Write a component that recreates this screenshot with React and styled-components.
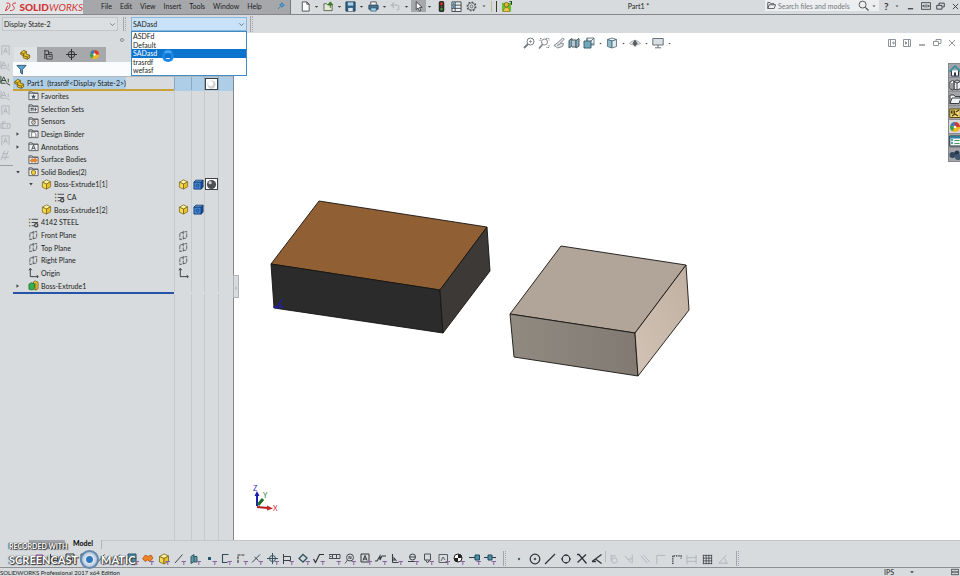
import React, { useState } from 'react'
import styled, { createGlobalStyle, css } from 'styled-components'

const GlobalStyle = createGlobalStyle`
  * { box-sizing: border-box; }
  html, body, #root { height: 100%; }
  body {
    margin: 0;
    overflow: hidden;
    background: #d7dbde;
    color: #1b1d20;
    font: 7px/12px Lato, "Open Sans", sans-serif;
  }
  button, input, select { font: inherit; color: inherit; }
  ul { list-style: none; margin: 0; padding: 0; }
`

/* ---------- icons ---------- */

const folder = (
  <path d="M1 10.500V2h3.500l1 1.500h5.500v7z M1 3.500h10" fill="#eceeef" stroke="#55585c" />
)
const cube = (top, left, right, line) => (
  <g stroke={line} strokeWidth=".8" strokeLinejoin="round">
    <path d="M1.500 3.500 6 1l4.500 2L6 5.500z" fill={top} />
    <path d="M1.500 3.500 6 5.500V11L1.500 9z" fill={left} />
    <path d="M10.500 3 6 5.500V11l4.500-2.500z" fill={right} />
  </g>
)
const material = (
  <g fill="none" stroke="#3d4144">
    <path d="M4 2.500h7M4 6h7M4 9.500h3" />
    <path d="M1 2.500h1.500M1 6h1.500M1 9.500h1.500" stroke="#8c7a3c" strokeWidth="1.500" />
    <circle cx="9" cy="9" r="1.800" strokeWidth="1.300" />
  </g>
)

const glyphs = {
  part: (
    <g stroke="#5f4c05" strokeWidth=".8" fill="#efc52b">
      <path d="M.8 4 4 1.500l3 1.200v3l3.500 1v3L8 11.300 3.500 9.500V7L.8 6z" />
      <path d="M.8 4 4 5.200v2.300l4 1.300 2.500-2M4 5.200l3-2.500M8 8.800v2.500" fill="none" />
    </g>
  ),
  favorites: <>{folder}<path d="m6 4.500.8 1.700 1.900.2-1.400 1.300.4 1.800L6 8.600l-1.700.9.400-1.800-1.400-1.300 1.900-.2z" fill="#3f5363" /></>,
  sets: <>{folder}<path d="M3.500 5v4M5.500 5v4M8 5v4M3 6h3M7 7h2.500" stroke="#44494d" fill="none" /></>,
  sensors: <>{folder}<circle cx="6" cy="7" r="2" fill="none" stroke="#494d51" /><path d="m6 7 2-2" stroke="#b4592a" /></>,
  binder: <>{folder}<path d="M4 4.500h2.500L8.500 6.500V10H4z" fill="#fff" stroke="#5a5d60" strokeWidth=".8" /></>,
  annotations: <>{folder}<path d="m4 9.500 2-5 2 5M4.700 8h2.600" fill="none" stroke="#3a3d40" strokeWidth=".9" /></>,
  surface: <>{folder}<path d="m2.500 7 2-2 1.500 1 2-1.500 1.800 2.500L8 9.200 6 8 4 9z" fill="#f08a24" stroke="#b2540d" strokeWidth=".6" /></>,
  solid: <>{folder}<path d="m3.800 5.500 2.200-1 2.200 1v3L6 9.800 3.800 8.500z" fill="#f0cb3a" stroke="#6b5608" strokeWidth=".7" /></>,
  body: cube('#fff3a0', '#f6d94e', '#e8c02e', '#77651b'),
  blueBody: (
    <g stroke="#10346c" strokeWidth=".9">
      <path d="M1 3.500 3 1.300h8L9 3.500z" fill="#6fb1ec" />
      <path d="M1 3.500h8V11H1z" fill="#3f87d6" />
      <path d="M9 3.500 11 1.300v7.500L9 11z" fill="#1f549c" />
      <circle cx="5" cy="7.200" r="1.500" fill="none" stroke="#0d2b5c" strokeWidth=".7" />
    </g>
  ),
  material,
  plane: <path d="M2 3.500 9.500 1.500v7L2 10.500zM5.700 1v10" fill="none" stroke="#4c5054" strokeWidth=".9" strokeDasharray="4 1" />,
  origin: <path d="M2.500 10.500V2m0 8.500H11M1 3.500 2.500 1.500 4 3.500M9.500 9 11.300 10.500 9.500 12" fill="none" stroke="#303336" />,
  extrude: (
    <g strokeWidth=".8">
      <path d="M6 2 8 1l3 1.500v7L8.500 11 6 10z" fill="#e5c23b" stroke="#6d5a12" />
      <path d="M8.500 3.500V11" stroke="#6d5a12" />
      <path d="M1 4.500 3.500 3 7 4v5l-2.500 2L1 10z" fill="#35b14c" stroke="#14662a" />
    </g>
  ),
  ball: <><circle cx="6" cy="6" r="5" fill="#4d4f52" /><circle cx="4.500" cy="4" r="1.800" fill="#c9cbce" /></>,
  whiteBall: <><circle cx="6" cy="6" r="4.500" fill="#d2d2d4" /><circle cx="5" cy="5" r="2.800" fill="#fff" /></>,
  property: <g fill="none" stroke="#34383c"><path d="M2 1v10M2 2h4v4H2M6 4h4M4 6v5h6V6zM6 8h3" /></g>,
  target: <g fill="none" stroke="#26292c"><circle cx="6" cy="6" r="3.500" /><path d="M6 0v12M0 6h12" /></g>,
  appearance: (
    <g>
      <circle cx="6" cy="6" r="5" fill="#f2b71f" />
      <path d="M6 6V1a5 5 0 0 0-4.700 3.500z" fill="#3b75c9" />
      <path d="M6 6 1.300 4.500a5 5 0 0 0 2 5.700z" fill="#3ba04b" />
      <path d="M6 6V1a5 5 0 0 1 5 5z" fill="#d8372c" />
      <circle cx="6" cy="6" r="1.300" fill="#fff" />
    </g>
  ),
  filter: <path d="M1 1.500h10L7 6v5L5 9.500V6z" fill="#5fa5cf" stroke="#24506f" />,
  pin: <path d="m7 1 4 4-2 .5L7.500 8 4 4.500 6.500 3zM5.500 6.500 1.500 10.500" fill="#4aa3dc" stroke="#1f6fa5" />,
  newDoc: <path d="M2.500 1h5L10 3.500V11H2.500zM7.500 1v2.500H10" fill="#fff" stroke="#4a4d50" />,
  open: <><path d="M1 10.500V3h3l1 1.200h5V10.500z" fill="#e5e8d8" stroke="#5b6350" /><path d="M8 7.500V2M5.500 4 8 1l2.500 3z" fill="#4c9b28" stroke="#33721b" /></>,
  save: <><path d="M1 1h10v10H1z" fill="#2f5f83" stroke="#213c52" /><path d="M3 1.500h6V5H3z" fill="#a9d1e8" /><path d="M3.500 7.500h5V11h-5z" fill="#dfe5e9" /></>,
  print: <><path d="M3 4V1h6v3" fill="#fff" stroke="#4b4f53" /><path d="M1 4.500h10V9H1z" fill="#47718f" stroke="#28465b" /><path d="M3 7.500h6V11H3z" fill="#9fd2ee" stroke="#28465b" strokeWidth=".7" /></>,
  undo: <path d="M1.500 4.500h6a2.800 2.800 0 0 1 0 5.500M4.500 1.500l-3 3 3 3" fill="none" stroke="#b5b9bc" strokeWidth="1.400" />,
  cursor: <path d="M3.500.8v8.700l2-2L7 11l1.500-.7L7 7h3z" fill="#fff" stroke="#2f3235" strokeWidth=".9" />,
  traffic: <><rect x="3" y="0" width="6" height="12" rx="2" fill="#2b2b2b" /><circle cx="6" cy="3" r="1.600" fill="#d52f24" /><circle cx="6" cy="6" r="1" fill="#6b5a26" /><circle cx="6" cy="9" r="1.600" fill="#3b8b37" /></>,
  list: <><path d="M1 1h10v10.500H1z" fill="#eef1f3" stroke="#3c4145" /><path d="M4.500 1v10.500M1 4.500h10M1 8h10" stroke="#3c4145" /><path d="M2 2h2v2H2zM2 5.500h2v2H2z" fill="#3f88b5" /></>,
  gear: <g fill="none" stroke="#4d5154"><circle cx="6" cy="6" r="4.800" strokeWidth="1.300" strokeDasharray="2 1.700" /><circle cx="6" cy="6" r="3.900" strokeWidth=".8" /><circle cx="6" cy="6" r="1.500" strokeWidth=".8" /></g>,
  person: <><path d="M1 2h10v9.500H1z" fill="#62c32f" /><circle cx="6" cy="4" r="2.500" fill="#e8b03a" stroke="#5b4312" strokeWidth=".6" /><path d="M2.500 11.500c0-6 7-6 7 0z" fill="#f0c14c" stroke="#845f10" strokeWidth=".6" /><path d="M9 0h2.500v4" fill="none" stroke="#12491b" strokeWidth="1.500" /></>,
  folderOpen: <path d="M1 10V2h3l1 1.500h4V5M1 10l2-5h8.500L9.500 10z" fill="none" stroke="#35393d" />,
  search: <g fill="none" stroke="#4d5154"><circle cx="5" cy="5" r="3.800" /><path d="m8 8 3.500 3.500" strokeWidth="1.400" /></g>,
  minimize: <path d="M2.500 9h7" stroke="currentColor" strokeWidth="1.600" />,
  panes: <path d="M.5 2h11v8H.5zM6 4v4M2 6h3M7 6h3M3.500 4.500 2 6l1.500 1.500M8.500 4.500 10 6 8.500 7.500" fill="none" stroke="currentColor" />,
  restore: <path d="M4 4V1.500h7v5H8.500M1 4.500h7v5H1z" fill="none" stroke="currentColor" strokeWidth="1.200" />,
  close: <path d="m2.500 2.500 7 7m0-7-7 7" stroke="currentColor" strokeWidth="1.200" />,
  docMinimize: <path d="M3 8h6" stroke="currentColor" strokeWidth="1.500" />,
  docRestore: <path d="M5 4.500V2.500h5v4H8M2.500 4.500h5v4h-5z" fill="none" stroke="currentColor" />,
  docClose: <path d="m3 3 6 6m0-6-6 6" stroke="currentColor" />,
  paneLeft: <path d="M2.500 2.500h7v7h-7zM4.500 2.500v7M8 4.800 6.500 6 8 7.200z" fill="none" stroke="currentColor" />,
  paneRight: <path d="M2.500 2.500h7v7h-7zM7.500 2.500v7M4.500 4.800 6 6 4.500 7.200z" fill="none" stroke="currentColor" />,
  zoomFit: <g fill="none" stroke="#75797d"><circle cx="7.500" cy="4.500" r="3.500" /><path d="m5 7-4 4" strokeWidth="1.800" /><path d="M6 4.500h3M7.500 3v3" strokeWidth=".7" /></g>,
  zoomArea: <g fill="none" stroke="#808488"><path d="M2 4V1.500h2.500M8 1.500h3V4M11 8v2.500H8" strokeDasharray="1.500 1" /><circle cx="6.500" cy="5" r="3" /><path d="m4.500 7.500-3.500 4" strokeWidth="1.700" /></g>,
  prevView: <path d="m.8 8.500 4-3 5-4.500 1.500 1.200L7.500 6l3 .5-1 3L4.500 11 3 9.500z M4 8.500l4-2" fill="#e3e7ea" stroke="#7c8185" strokeWidth=".9" />,
  section: <><path d="m1 3.500 3-2v7.500l-3 2z" fill="#7ba8b8" stroke="#475a62" /><path d="M4 3h4v7H4" fill="#b9c9d0" stroke="#475a62" /><path d="m8 3.500 3-2v7.500l-3 2z" fill="#8fb2be" stroke="#475a62" /></>,
  orientation: <><path d="M4 1h7v7H4z" fill="#eef2f4" stroke="#6e828b" /><path d="M1 4h7v7H1z" fill="#6fa9bd" stroke="#42606d" /><path d="M8 4 11 1M4 4V1M8 7h3" stroke="#42606d" strokeWidth=".8" /></>,
  display: (
    <g stroke="#4a6875" strokeWidth=".8">
      <path d="M1.500 2.500 6 1l4.500 1.500L6 4z" fill="#e7f0f3" />
      <path d="M1.500 2.500 6 4v7L1.500 9.500z" fill="#8fbccb" />
      <path d="M10.500 2.500 6 4v7l4.500-1.500z" fill="#dfe9ed" />
    </g>
  ),
  eye: <><path d="M.5 6.500C3 2.500 9 2.500 11.500 6.500 9 8.500 3 8.500.5 6.500z" fill="#d9dbdd" stroke="#9a9da0" strokeWidth=".7" /><path d="m6 2.500 2.500 4L6 10 3.500 6.500z" fill="#5a5d60" /></>,
  monitor: <><path d="M.8 1.500h10.400v6.500H.8z" fill="#d9e0e3" stroke="#6c7074" /><path d="M6 8v2.500M3 10.800h6" stroke="#6c7074" /></>,
  home: <><path d="M2.500 5.500V11h7V5.500" fill="#fff" stroke="#2b3b44" /><path d="M.5 6.500 6 1l5.500 5.500" fill="none" stroke="#3c8f9d" strokeWidth="1.800" /><path d="M5 7.500h2V11H5z" fill="#335" /></>,
  library: (
    <g stroke="#33373b" strokeWidth=".9" fill="#eff0f1">
      <path d="m1 3 2.500-1.500L5 2.500v8L3.500 11 1 9.500zM3 4v7M5 2.500 8 1l3.500 1.500v7L8 11l-3-1zM8 4v7M5 2.500 8 4l3.500-1.500" />
    </g>
  ),
  files: <path d="M1 10.500V2h4l1 1.500h5V5M1 10.500 3 5h9l-2 5.500z" fill="#f3f4f5" stroke="#3a3e42" />,
  palette: <><path d="M.8 2h10.500v8.500H.8z" fill="#f1d878" stroke="#5d4a10" /><path d="M2.500 4h3v2h-3zM7 5l3-2M3 9l3-2 3 2" fill="none" stroke="#473807" strokeWidth="1.200" /></>,
  properties: <><path d="M.8 1h11v10H.8z" fill="#f4f8fa" stroke="#1f2f38" /><path d="M.8 1h11v2.500H.8z" fill="#2f7f98" /><path d="M2 5h2M2 8h2" stroke="#2f7f98" strokeWidth="1.500" /><path d="M5.500 5.500h5M5.500 8.500h5" stroke="#495" /></>,
  forum: <><circle cx="3.500" cy="6" r="3" fill="#33475e" /><circle cx="8" cy="4" r="2.500" fill="#27394f" /><circle cx="9" cy="8" r="3" fill="#40566f" /></>,
  // selection filter strip
  fPurple: <path d="M2 2h7v8H2zM3 5h5" fill="#c9a6cf" stroke="#8a4b94" />,
  fBox: <path d="M1 1h8v8H1z" fill="#4b8fa8" stroke="#285869" />,
  fSurface: <path d="m.5 5.500 3-3.500 2.500 1.500 3-1.500L11 5 8 8.500 5.500 7 3 8.500z" fill="#ef8126" stroke="#a94f0b" strokeWidth=".7" />,
  fLine: <path d="M1 10 8.500 1.500" stroke="#40464a" />,
  fFace: <path d="m2 3.500 3-2v7l-3 2zM5 3.500h3V9H5" fill="#5f98a7" stroke="#315a67" />,
  fPoint: <path d="M3 4h3v3H3z" fill="#28586e" />,
  fSketch: <path d="M8.500 1.500h-6v8h5" fill="none" stroke="#2e4c5c" strokeWidth="1.100" />,
  fSegment: <path d="M2 10V2h7" fill="none" stroke="#33383c" strokeWidth="1.100" strokeDasharray="3 .8" />,
  fMid: <path d="m1 9.500 8-8M3.500 4l4 3.500" stroke="#3b4a54" />,
  fCenter: <g fill="none" stroke="#35545f"><circle cx="5.500" cy="5.500" r="3" /><path d="M5.500 0v11M0 5.500h11" /></g>,
  fDim: <path d="M1.500 1v10M1.500 3.500h7v4h-7" fill="none" stroke="#3d4246" />,
  fTag: <path d="m1 5.500 4-4 4 3.500-4 4z" fill="none" stroke="#35545f" strokeWidth="1.300" />,
  fCheck: <path d="m.5 6 2 3.500L6.500 1.500H11" fill="none" stroke="#2c3033" strokeWidth="1.200" />,
  fTol: <path d="M0 1.500h11v4H0zM3.500 1.500v4M7.500 1.500v4M1 3.500h1.500" fill="none" stroke="#4a4e52" />,
  fNote: <g fill="none" stroke="#4a4e52"><circle cx="6" cy="4.500" r="3.500" /><path d="M3.500 7 1 10.500M5 6V3l2 3V3" strokeWidth=".9" /></g>,
  fText: <path d="M1 1h8v8H1zM3 7.500l2-5 2 5M3.800 6h2.500" fill="none" stroke="#303437" />,
  fWeld: <path d="M0 8h2l3-5v4l2-4h4" fill="none" stroke="#33383c" strokeWidth="1.100" />,
  fHole: <path d="M1.500 1v8.500M3 8V5l2.500 3M1.500 9.500h6" fill="none" stroke="#3a3f43" strokeWidth="1.100" />,
  fDatum: <g fill="none" stroke="#3a3f43"><circle cx="5.500" cy="4" r="3" /><path d="M1 8.500h8M3 4h5" /></g>,
  fBolt: <path d="M2.500 1h6v6h-6zM3.500 7l2 3 2-3" fill="none" stroke="#4c5155" />,
  fRegion: <path d="M1 1.500h8.500v8H1zM3 8l2-4 2 3" fill="none" stroke="#5c6165" />,
  fMass: <><circle cx="5" cy="5" r="4" fill="#fff" stroke="#222" /><path d="M5 5V1a4 4 0 0 1 4 4zM5 5v4a4 4 0 0 1-4-4z" fill="#222" /></>,
  fEnd: <><path d="M0 4.500h6" stroke="#2d3940" /><path d="M6 2h4.500v5H6z" fill="#4b8fa8" stroke="#204a5b" /></>,
  fRoute: <><path d="M0 4.500h12" stroke="#2d3940" /><path d="M4 2h4v5H4z" fill="#4b8fa8" stroke="#204a5b" /></>,
  // snaps
  sPoint: <circle cx="6" cy="6" r="1.200" fill="#506068" />,
  sCenter: <g fill="none" stroke="#303438"><circle cx="6" cy="6" r="4.800" strokeWidth="1.200" /><circle cx="6" cy="6" r=".8" /></g>,
  sLine: <path d="m1 11 10-10" stroke="#303438" strokeWidth="1.300" />,
  sQuad: <g fill="none" stroke="#303438"><circle cx="6" cy="6" r="3.800" strokeWidth="1.200" /><path d="M6 1v2M6 9v2M1 6h2M9 6h2" /></g>,
  sCross: <path d="M1 1.500h2l7.500 9M10 1.500 1.500 9.500" stroke="#303438" strokeWidth="1.300" fill="none" />,
  sNear: <path d="m1 8.500 9.500-7M4.500 6l6 4.500M1 8.500h4" stroke="#303438" strokeWidth="1.300" />,
  sTangent: <g fill="none" stroke="currentColor"><circle cx="7" cy="7" r="3" /><path d="M3.500 1v6.500M3.500 2h5" /></g>,
  sPerp: <path d="m1 2 7 8M9 1v9M9 5 4 6" fill="none" stroke="currentColor" />,
  sParallel: <path d="m1 2 7 8M4 1l7 8" stroke="currentColor" />,
  sHV: <path d="M2 11V1.500h9" fill="none" stroke="currentColor" />,
  sHVPoints: <path d="M2 11V2h9v3" fill="none" stroke="#303438" strokeWidth="1.500" strokeDasharray="1.500 1" />,
  sLength: <path d="M1 1v10M11 1v10M1 4h10M1 8h10" stroke="currentColor" />,
  sGrid: <path d="M1.500 1v10M4.500 1v10M7.500 1v10M10.500 1v10M1 1.500h10M1 4.500h10M1 7.500h10M1 10.500h10" stroke="#303438" strokeWidth=".8" />,
  sAngle: <path d="M9 1 1 10h10M7 4q2 2 2 6" fill="none" stroke="currentColor" />,
  // side strip
  note: <path d="M2 11V1h8v10M4 9l2-6 2 6M4.500 7h3" fill="none" stroke="currentColor" />,
  noteArrow: <path d="M1 1v8h5M1 8l3-6 3 6M2 6h4M9 4v4M7 9l4 2" fill="none" stroke="currentColor" />,
  cap: <path d="M1 4h10v5H1zM3 9V2h3M8 5v3" fill="none" stroke="currentColor" />,
  hatch: <path d="m1 11 4-10M5 11 9 1M3 4h5M2 8h8" stroke="currentColor" />,
  chevron: <path d="m3 4.500 3 3 3-3" fill="none" stroke="#585d62" />,
  caret: <path d="M3 5h6L6 8z" fill="#3d4145" />,
  triRight: <path d="m3 2.500 5 3.500-5 3.500z" fill="#3d4145" />,
  triDown: <path d="M2.500 4h7L6 9z" fill="#3d4145" />,
}

const Svg = styled.svg`
  display: block;
  flex: none;
  width: ${p => p.$size}px;
  height: ${p => p.$size}px;
`

const Icon = ({ name, size = 11, filter }) => (
  <Svg $size={size} viewBox="0 0 12 12" aria-hidden="true">
    {glyphs[name]}
    {filter && <path d="M7.500 8.500h4.500M9.800 8.500v3.500" stroke="#8a62a0" />}
  </Svg>
)

/* ---------- shared ---------- */

const Page = styled.div`
  position: relative;
  display: flex;
  flex-direction: column;
  height: 100vh;
  overflow: hidden;
`

const IconButton = styled.button`
  display: flex;
  align-items: center;
  justify-content: center;
  min-width: 0;
  padding: 0;
  border: 0;
  color: ${p => p.$tone || '#33373b'};
  background: ${p => (p.$active ? '#a5a7ab' : 'transparent')};
`

/* ---------- title bar ---------- */

const TitleBar = styled.header`
  display: flex;
  flex: none;
  height: 15px;
  border-bottom: 1px solid #85878c;
`

const Logo = styled.div`
  display: flex;
  align-items: center;
  gap: 3px;
  width: 83px;
  padding-left: 5px;
  background: #e3e4e6;
  color: #cf3535;
  font-size: 10px;
  font-style: italic;

  b { font-style: normal; font-weight: 900; }
`

const MenuBar = styled.nav`
  display: flex;
  align-items: center;
  gap: 8px;
  width: 208px;
  padding: 0 5px 2px 18px;
  border-right: 1px solid #77797d;
  background: #a6a7ab;
`

const MenuItem = styled.button`
  padding: 0;
  border: 0;
  background: none;
  line-height: 12px;
`

const PinSlot = styled.span`
  margin-left: auto;
`

const QuickTools = styled.div`
  display: flex;
  flex: none;
  width: 135px;
  margin-left: 7px;
  padding-bottom: 2px;
`

const Tool = styled.div`
  display: flex;
  flex: 1;
  align-items: stretch;

  > :first-child { width: 15px; }
`

const ExtraTools = styled.div`
  display: flex;
  flex: none;
  align-items: center;
  gap: 4px;
  padding: 0 0 2px 3px;
`

const Divider = styled.span`
  width: 1px;
  height: 11px;
  background: ${p => p.$color || '#9a9da1'};
`

const DocTitle = styled.h1`
  flex: 1;
  margin: 0;
  font-size: 7px;
  font-weight: 400;
  line-height: 12px;
  text-align: center;
`

const SearchBox = styled.label`
  display: flex;
  align-items: center;
  gap: 2px;
  height: 11px;
  width: 114px;
  padding: 0 2px;
  background: #eceef0;
`

const SearchInput = styled.input`
  flex: 1;
  min-width: 0;
  height: 11px;
  padding: 0;
  border: 0;
  background: none;

  &::placeholder { color: #75797e; opacity: 1; }
`

const WindowButtons = styled.div`
  display: flex;
  align-items: center;
  justify-content: space-between;
  height: 12px;
  width: 76px;
  margin-left: 5px;

  b { font-size: 10px; }
`

/* ---------- configuration bar ---------- */

const ConfigBar = styled.div`
  display: flex;
  flex: none;
  align-items: center;
  height: 18px;
  padding-left: 2px;
`

const Grip = styled.span`
  width: 3px;
  height: ${p => p.$height || 14}px;
  margin: 0 ${p => p.$gap || 5}px;
  border-left: 1px solid #a3a6aa;
  border-right: 1px dotted #a3a6aa;
`

const Combo = styled.div`
  position: relative;
  display: flex;
  align-items: center;
  width: 116px;
  height: 14px;
  border: 1px solid ${p => (p.$open ? '#8ab6dc' : '#c3c6c9')};
  background: ${p => (p.$open ? '#c9e2f7' : '#dcdfe2')};

  > svg { position: absolute; right: 0; pointer-events: none; }
`

const Select = styled.select`
  width: 100%;
  height: 12px;
  padding: 0 12px 0 1px;
  border: 0;
  background: none;
  appearance: none;
  outline: 0;
`

const Popup = styled.ul`
  position: absolute;
  z-index: 5;
  top: 13px;
  left: -1px;
  display: flex;
  flex-direction: column;
  width: 116px;
  height: 45px;
  border: 1px solid #3e8bc6;
  background: #fff;
`

const Choice = styled.li`
  flex: 1;
  min-height: 0;
  padding-left: 1px;
  line-height: 8px;
  color: ${p => (p.$selected ? '#fff' : 'inherit')};
  background: ${p => (p.$selected ? '#0b74cc' : 'transparent')};
`

const Busy = styled.span`
  position: absolute;
  z-index: 6;
  top: 32px;
  left: 30px;
  width: 12px;
  height: 12px;
  border: 3px solid #1b86e6;
  border-top-color: #48a6f5;
  border-radius: 50%;
`

/* ---------- feature manager ---------- */

const Main = styled.main`
  display: flex;
  flex: 1;
  min-height: 0;
`

const Side = styled.aside`
  position: relative;
  display: flex;
  flex: none;
  width: 234px;
  border-right: 1px solid #85878b;
`

const SideStrip = styled.div`
  display: flex;
  flex-direction: column;
  align-items: flex-start;
  gap: 4px;
  width: 13px;
  height: 133px;
  padding-top: 12px;
  overflow: hidden;
  border-bottom: 1px solid #9b9ea2;
`

const Manager = styled.div`
  display: flex;
  flex: 1;
  flex-direction: column;
  min-width: 0;
`

const ManagerTop = styled.div`
  display: flex;
  justify-content: flex-end;
  align-items: center;
  height: 14px;
  padding-right: 109px;

  i {
    width: 4px;
    height: 4px;
    border: 1px solid #8b8e92;
    border-radius: 50%;
  }
`

const Tabs = styled.div`
  display: flex;
  height: 15px;
  padding-left: 1px;

  button { width: 23px; background: #a6a8ab; }
  button:first-child { background: #dfe2e4; }
`

const FilterRow = styled.label`
  display: flex;
  align-items: center;
  height: 15px;
  padding-left: 3px;
  border-bottom: 1px solid #b5b8bb;
  background: #fbfcfd;
`

const FilterInput = styled.input`
  flex: 1;
  min-width: 0;
  height: 12px;
  border: 0;
  background: none;
`

const Tree = styled.ul`
  display: flex;
  flex: none;
  flex-direction: column;
  height: 215px;
`

const columns = css`
  display: grid;
  grid-template-columns: 1fr 17px 13px 14px 15px;
`

const Row = styled.li`
  ${columns}
  flex: 1;
  min-height: 0;
`

const Filler = styled.div`
  ${columns}
  flex: 1;
`

const Cell = styled.span`
  display: flex;
  align-items: center;
  justify-content: center;
  min-width: 0;
  border-left: 1px solid ${p => (p.$on ? '#86aac6' : '#c6cacd')};
  background: ${p => (p.$on ? '#aecde6' : 'transparent')};
`

const Swatch = styled.span`
  display: flex;
  align-items: center;
  justify-content: center;
  flex: none;
  width: 13px;
  height: 12px;
  border: 1px solid #3f4245;
  background: #fff;
`

const levels = { 0: 1, 1: 2, 2: 15, 3: 28 }

const Name = styled.span`
  display: flex;
  align-items: center;
  gap: 2px;
  min-width: 0;
  padding-left: ${p => levels[p.$level]}px;
  white-space: pre;
  border-bottom: ${p => (p.$level === 0 ? '2px solid #c9a23a' : '0')};
  background: ${p => (p.$level === 0 ? 'linear-gradient(90deg, #aecde6 113px, #d7dbde 113px)' : 'none')};
`

const Twist = styled.button`
  display: flex;
  width: 11px;
  height: 8px;
  align-items: center;
  justify-content: flex-start;
  padding: 0;
  border: 0;
  background: none;
`

const Rollback = styled.div`
  flex: none;
  width: 161px;
  height: 2px;
  background: #2453a8;
`

const SplitHandle = styled.button`
  position: absolute;
  z-index: 2;
  top: 242px;
  right: -6px;
  width: 6px;
  height: 23px;
  padding: 0;
  border: 1px solid #aeb1b5;
  background: #d7dbde;
  line-height: 20px;
  color: #777;
`

/* ---------- viewport ---------- */

const Viewport = styled.section`
  position: relative;
  flex: 1;
  min-width: 0;
  background: #fff;
`

const Scene = styled.svg`
  display: block;
  width: 100%;
  height: 100%;
`

const HeadsUp = styled.div`
  position: absolute;
  top: 4px;
  left: 289px;
  display: flex;
  gap: 3px;
  align-items: center;
`

const DocButtons = styled.div`
  position: absolute;
  top: 4px;
  right: 2px;
  display: flex;
  gap: 3px;
`

const TaskPane = styled.div`
  position: absolute;
  top: 30px;
  right: 0;
  display: flex;
  flex-direction: column;
  width: 12px;
  border: 1px solid #85878b;
  border-right: 0;
  background: #a3a5a9;

  button {
    height: 13px;
    justify-content: flex-start;
    border-bottom: 1px solid #8a8c90;
    box-sizing: content-box;
  }
  button:last-child { border-bottom: 0; }
  button:nth-child(5) { background: #d5d7da; }
`

/* ---------- bottom ---------- */

const Dock = styled.footer`
  flex: none;
  height: 27px;
`

const SheetTabs = styled.div`
  display: flex;
  height: 11px;
  padding-left: 29px;
`

const SheetArrows = styled.span`
  width: 36px;
  height: 9px;
  background: #a0a3a7;
`

const SheetTab = styled.button`
  width: 37px;
  height: 9px;
  padding: 0 0 2px;
  border: 0;
  border-right: 1px solid #b1b4b8;
  background: none;
  color: #000;
  font-weight: 700;
  line-height: 7px;
`

const SheetRest = styled.span`
  flex: 1;
  border-top: 1px solid #c4c7ca;
`

const Filters = styled.div`
  display: flex;
  height: 16px;
  padding-left: 32px;
`

const Strip = styled.div`
  display: flex;
  flex: none;
  width: ${p => p.$width}px;

  button { flex: 1; }
`

const StatusBar = styled.div`
  display: flex;
  flex: none;
  height: 9px;
  border-top: 1px solid #8d9094;
  line-height: 8px;
  white-space: nowrap;
`

const Edition = styled.span`
  flex: 1;
  font-size: 6px;
  line-height: 9px;
`

const StatusItem = styled.span`
  width: ${p => p.$width}px;
`

const Watermark = styled.div`
  position: absolute;
  z-index: 8;
  bottom: 7px;
  left: 9px;
  color: #fff;
  font-weight: 700;
  text-shadow: 0 0 1px #222, 1px 1px 1px #333, -1px 0 1px #555;
`

const WatermarkSmall = styled.div`
  line-height: 8px;
`

const WatermarkLine = styled.div`
  display: flex;
  align-items: center;
  gap: 2px;
  font-size: 11px;
  line-height: 18px;
`

const Lens = styled.span`
  width: 19px;
  height: 19px;
  border: 2px solid #6588ad;
  border-radius: 50%;
  background: radial-gradient(circle, #2f76c0 3px, #dfe8f1 4px, #a8bfd6 8px);
`

/* ---------- data ---------- */

const menus = ['File', 'Edit', 'View', 'Insert', 'Tools', 'Window', 'Help']
const quickTools = ['newDoc', 'open', 'save', 'print', 'undo', 'cursor']
const configurations = ['ASDFd', 'Default', 'SADasd', 'trasrdf', 'wefasf']
const sideIcons = ['note', 'noteArrow', 'noteArrow', 'noteArrow', 'note', 'cap', 'note', 'hatch']

const rows = [
  { icon: 'part', text: 'Part1  (trasrdf<Display State-2>)', level: 0, cells: [null, null, 'whiteBall'] },
  { icon: 'favorites', text: 'Favorites', level: 1 },
  { icon: 'sets', text: 'Selection Sets', level: 1 },
  { icon: 'sensors', text: 'Sensors', level: 1 },
  { icon: 'binder', text: 'Design Binder', level: 1, twist: 'triRight' },
  { icon: 'annotations', text: 'Annotations', level: 1, twist: 'triRight' },
  { icon: 'surface', text: 'Surface Bodies', level: 1 },
  { icon: 'solid', text: 'Solid Bodies(2)', level: 1, twist: 'triDown' },
  { icon: 'body', text: 'Boss-Extrude1[1]', level: 2, twist: 'triDown', cells: ['body', 'blueBody', 'ball'] },
  { icon: 'material', text: 'CA', level: 3 },
  { icon: 'body', text: 'Boss-Extrude1[2]', level: 2, cells: ['body', 'blueBody'] },
  { icon: 'material', text: '4142 STEEL', level: 1 },
  { icon: 'plane', text: 'Front Plane', level: 1, cells: ['plane'] },
  { icon: 'plane', text: 'Top Plane', level: 1, cells: ['plane'] },
  { icon: 'plane', text: 'Right Plane', level: 1, cells: ['plane'] },
  { icon: 'origin', text: 'Origin', level: 1, cells: ['origin'] },
  { icon: 'extrude', text: 'Boss-Extrude1', level: 1, twist: 'triRight' },
]

const headsUp = ['zoomFit', 'zoomArea', 'prevView', 'section', 'orientation', 'caret', 'display', 'caret', 'eye', 'caret', 'monitor', 'caret']
const docButtons = ['paneLeft', 'paneRight', 'docMinimize', 'docRestore', 'docClose']
const taskPane = ['home', 'library', 'files', 'palette', 'appearance', 'properties', 'forum']

const filters = [
  'fPurple', 'fDim', 'fText', 'fBox', 'fLine', 'fMid', 'fBox', 'fSurface', 'body', 'fLine',
  'fFace', 'fPoint', 'fSketch', 'fSegment', 'fMid', 'fCenter', 'fDim', 'fTag', 'fCheck', 'fTol',
  'fNote', 'fText', 'fWeld', 'fHole', 'fDatum', 'fBolt', 'fRegion', 'fMass', 'fEnd', 'fRoute',
]
const sketchSnaps = ['sPoint', 'sCenter', 'sLine', 'sQuad', 'sCross', 'sNear']
const moreSnaps = ['sTangent', 'sPerp', 'sParallel', 'sHV', 'sHVPoints', 'sLength', 'sGrid', 'sAngle']

/* ---------- parts ---------- */

const TreeRow = ({ row }) => (
  <Row>
    <Name $level={row.level}>
      {row.level > 0 && row.level < 3 && (
        <Twist aria-label={`Toggle ${row.text}`}>{row.twist && <Icon name={row.twist} size={6} />}</Twist>
      )}
      {row.level === 3 && <Twist as="span" />}
      <Icon name={row.icon} />
      {row.text}
    </Name>
    {[0, 1, 2, 3].map((i) => {
      const icon = row.cells && row.cells[i]
      const ball = icon === 'ball' || icon === 'whiteBall'
      return (
        <Cell key={i} $on={row.level === 0}>
          {ball && <Swatch><Icon name={icon} /></Swatch>}
          {icon && !ball && <Icon name={icon} />}
        </Cell>
      )
    })}
  </Row>
)

const Model = () => (
  <Scene viewBox="234 33 726 507" preserveAspectRatio="xMinYMin meet" role="img" aria-label="Model view">
    <defs>
      <linearGradient id="side" x1="0" x2="1" y1="1" y2="0">
        <stop offset="0" stopColor="#d2c3b6" />
        <stop offset="1" stopColor="#bfb0a2" />
      </linearGradient>
      <linearGradient id="front" x1="0" x2="1">
        <stop offset="0" stopColor="#908a81" />
        <stop offset="1" stopColor="#827a72" />
      </linearGradient>
    </defs>
    <g stroke="#161412" strokeWidth=".9" strokeLinejoin="round">
      <path d="M319 201 487 227 440 290 271 264z" fill="#905f33" />
      <path d="M271 264 440 290 443 333 274 308z" fill="#2c2b2b" />
      <path d="M487 227 490 271 443 333 440 290z" fill="#3c3937" />
      <path d="M561 246 686 265 635 333 510 314z" fill="#b0a598" />
      <path d="M510 314 635 333 638 376 514 357z" fill="url(#front)" />
      <path d="M686 265 689 310 638 376 635 333z" fill="url(#side)" />
    </g>
    <path d="M273 307h10M276 309l6-10M280 304l3 4" stroke="#2219c8" fill="none" />
    <g fill="none" strokeWidth="2">
      <path d="M257 506V495" stroke="#1c1fae" />
      <path d="m254.500 496 2.500-5 2.500 5z" fill="#1c1fae" stroke="none" />
      <path d="m258 505 5-6" stroke="#1f6b2b" strokeWidth="3" />
      <path d="M257 507 268 508" stroke="#b01d22" />
      <path d="m267 505.500 6 3-6 2z" fill="#c4242a" stroke="none" />
    </g>
    <g fontSize="7" fontFamily="Lato, sans-serif">
      <text x="253" y="491" fill="#2a2cc0">Z</text>
      <text x="263" y="498" fill="#276f32">Y</text>
      <text x="273" y="511" fill="#cc2a2f">X</text>
    </g>
  </Scene>
)

function App() {
  const [config, setConfig] = useState('SADasd')

  return (
    <Page>
      <GlobalStyle />
      <TitleBar>
        <Logo>
          <svg width="15" height="12" viewBox="0 0 15 12" fill="none" stroke="#cf3535" strokeWidth="1.300" aria-hidden="true">
            <path d="M2 1h2.500C8.500 1.500 6 9.500.5 10.800L3.500 4M14.500 1C10.500 0 8.500 3 11 5c2.500 2.500 1 5.800-4.500 5.800" />
          </svg>
          <span><b>SOLID</b>WORKS</span>
        </Logo>
        <MenuBar>
          {menus.map((menu) => <MenuItem key={menu}>{menu}</MenuItem>)}
          <PinSlot><Icon name="pin" size={8} /></PinSlot>
        </MenuBar>
        <QuickTools>
          {quickTools.map((tool) => (
            <Tool key={tool}>
              <IconButton aria-label={tool} $active={tool === 'cursor'}><Icon name={tool} /></IconButton>
              <IconButton aria-label={`${tool} options`}><Icon name="caret" size={7} /></IconButton>
            </Tool>
          ))}
        </QuickTools>
        <ExtraTools>
          <IconButton aria-label="Rebuild"><Icon name="traffic" /></IconButton>
          <IconButton aria-label="File properties"><Icon name="list" /></IconButton>
          <IconButton aria-label="Options"><Icon name="gear" /></IconButton>
          <Icon name="caret" size={6} />
          <Divider $color="#c0b98a" />
          <Divider $color="#3a3a2c" />
          <IconButton aria-label="Account"><Icon name="person" /></IconButton>
        </ExtraTools>
        <DocTitle>Part1 *</DocTitle>
        <SearchBox>
          <Icon name="folderOpen" size={9} />
          <SearchInput aria-label="Search files and models" placeholder="Search files and models" />
          <Icon name="search" />
          <Icon name="caret" size={6} />
        </SearchBox>
        <WindowButtons>
          <IconButton aria-label="Help"><b>?</b></IconButton>
          <Icon name="caret" size={6} />
          <IconButton aria-label="Minimize"><Icon name="minimize" size={9} /></IconButton>
          <IconButton aria-label="Panes"><Icon name="panes" size={10} /></IconButton>
          <IconButton aria-label="Restore"><Icon name="restore" size={9} /></IconButton>
          <IconButton aria-label="Close"><Icon name="close" size={9} /></IconButton>
        </WindowButtons>
      </TitleBar>

      <ConfigBar>
        <Combo>
          <Select aria-label="Display state" defaultValue="Display State-2">
            <option>Display State-2</option>
          </Select>
          <Icon name="chevron" size={9} />
        </Combo>
        <Grip />
        <Combo $open>
          <Select aria-label="Configuration" value={config} onChange={(e) => setConfig(e.target.value)}>
            {configurations.map((name) => <option key={name}>{name}</option>)}
          </Select>
          <Icon name="chevron" size={9} />
          <Popup role="listbox" aria-label="Configurations">
            {configurations.map((name) => (
              <Choice
                key={name}
                role="option"
                aria-selected={name === config}
                $selected={name === config}
                onClick={() => setConfig(name)}
              >
                {name}
              </Choice>
            ))}
          </Popup>
          <Busy />
        </Combo>
        <Grip $gap={3} $height={16} />
      </ConfigBar>

      <Main>
        <Side>
          <SideStrip>
            {sideIcons.map((name, i) => (
              <IconButton key={i} aria-label={`Annotation ${i + 1}`} $tone={i === 2 ? '#26402b' : '#b0b4b8'}>
                <Icon name={name} />
              </IconButton>
            ))}
          </SideStrip>
          <Manager>
            <ManagerTop><i /></ManagerTop>
            <Tabs>
              {['part', 'property', 'target', 'appearance'].map((name) => (
                <IconButton key={name} aria-label={name}><Icon name={name} /></IconButton>
              ))}
            </Tabs>
            <FilterRow>
              <Icon name="filter" />
              <FilterInput aria-label="Filter" />
            </FilterRow>
            <Tree>
              {rows.map((row) => <TreeRow key={row.text} row={row} />)}
            </Tree>
            <Rollback />
            <Filler><span /><Cell /><Cell /><Cell /><Cell /></Filler>
          </Manager>
          <SplitHandle aria-label="Collapse panel">‹</SplitHandle>
        </Side>

        <Viewport>
          <Model />
          <HeadsUp>
            {headsUp.map((name, i) => (
              <IconButton key={i} aria-label={name}><Icon name={name} size={name === 'caret' ? 5 : 12} /></IconButton>
            ))}
          </HeadsUp>
          <DocButtons>
            {docButtons.map((name) => (
              <IconButton key={name} aria-label={name} $tone="#8f9296"><Icon name={name} size={12} /></IconButton>
            ))}
          </DocButtons>
          <TaskPane>
            {taskPane.map((name) => (
              <IconButton key={name} aria-label={name}><Icon name={name} size={12} /></IconButton>
            ))}
          </TaskPane>
        </Viewport>
      </Main>

      <Dock>
        <SheetTabs>
          <SheetArrows />
          <SheetTab>Model</SheetTab>
          <SheetRest />
        </SheetTabs>
        <Filters>
          <Strip $width={466}>
            {filters.map((name, i) => (
              <IconButton key={i} aria-label={`Filter ${i + 1}`}><Icon name={name} size={12} filter /></IconButton>
            ))}
          </Strip>
          <Grip $height={15} />
          <Strip $width={94}>
            {sketchSnaps.map((name) => (
              <IconButton key={name} aria-label={name}><Icon name={name} size={12} /></IconButton>
            ))}
          </Strip>
          <Divider $color="#b9bcc0" />
          <Strip $width={125}>
            {moreSnaps.map((name) => (
              <IconButton key={name} aria-label={name} $tone="#b0b4b8"><Icon name={name} /></IconButton>
            ))}
          </Strip>
          <Grip $height={15} />
        </Filters>
      </Dock>

      <StatusBar>
        <Edition>SOLIDWORKS Professional 2017 x64 Edition</Edition>
        <StatusItem $width={24}>IPS</StatusItem>
        <StatusItem $width={43}><Icon name="caret" size={8} /></StatusItem>
        <StatusItem $width={9}><Icon name="panes" size={8} /></StatusItem>
      </StatusBar>

      <Watermark>
        <WatermarkSmall>RECORDED WITH</WatermarkSmall>
        <WatermarkLine>SCREENCAST<Lens />MATIC</WatermarkLine>
      </Watermark>
    </Page>
  )
}

export default App
